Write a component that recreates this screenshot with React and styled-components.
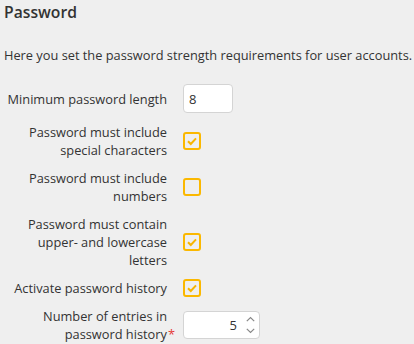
import React, { useState } from 'react';
import styled, { createGlobalStyle } from 'styled-components';

const GlobalStyle = createGlobalStyle`
  body {
    margin: 0;
    background: #efefef;
    font-family: "Open Sans", "Noto Sans", sans-serif;
    color: #333;
  }
`;

function CheckIcon() {
  return (
    <svg width="12" height="12" viewBox="0 0 12 12">
      <path d="M2 6.2 L4.8 9 L10 3.4" fill="none" stroke="#f7b500" strokeWidth="2" />
    </svg>
  );
}

function Check({ checked, onClick }) {
  return (
    <CheckBox onClick={onClick}>{checked && <CheckIcon />}</CheckBox>
  );
}

function Spinner() {
  return (
    <SpinnerBox>
      <svg width="9" height="7" viewBox="0 0 9 7">
        <path d="M0.8 5.2 L4.5 1.5 L8.2 5.2" fill="none" stroke="#888" strokeWidth="1.2" />
      </svg>
      <svg width="9" height="7" viewBox="0 0 9 7">
        <path d="M0.8 1.8 L4.5 5.5 L8.2 1.8" fill="none" stroke="#888" strokeWidth="1.2" />
      </svg>
    </SpinnerBox>
  );
}

function App() {
  const [checks, setChecks] = useState({ special: true, numbers: false, cases: true, history: true });
  const toggle = key => setChecks({ ...checks, [key]: !checks[key] });

  return (
    <Container>
      <GlobalStyle />
      <Title>Password</Title>
      <Description>Here you set the password strength requirements for user accounts.</Description>
      <Form>
        <Row>
          <Label>Minimum password length</Label>
          <TextBox>8</TextBox>
        </Row>
        <Row>
          <Label>Password must include special characters</Label>
          <Check checked={checks.special} onClick={() => toggle('special')} />
        </Row>
        <Row>
          <Label>Password must include numbers</Label>
          <Check checked={checks.numbers} onClick={() => toggle('numbers')} />
        </Row>
        <Row>
          <Label>Password must contain upper- and lowercase letters</Label>
          <Check checked={checks.cases} onClick={() => toggle('cases')} />
        </Row>
        <Row>
          <Label>Activate password history</Label>
          <Check checked={checks.history} onClick={() => toggle('history')} />
        </Row>
        <Row>
          <Label>
            Number of entries in password history<Required>*</Required>
          </Label>
          <NumberBox>
            <NumberValue>5</NumberValue>
            <Spinner />
          </NumberBox>
        </Row>
      </Form>
    </Container>
  );
}

export default App;

const Container = styled.div`
  padding: 0 4px;
`;

const Title = styled.div`
  font-size: 15.7px;
  font-weight: 600;
  line-height: 24px;
  color: #333;
`;

const Description = styled.div`
  margin-top: 22px;
  font-size: 12.8px;
  line-height: 18px;
  white-space: nowrap;
`;

const Form = styled.div`
  margin-top: 20px;
  display: flex;
  flex-direction: column;
  gap: 10px;
`;

const Row = styled.div`
  display: flex;
  align-items: center;
  gap: 16px;
`;

const Label = styled.div`
  width: 163px;
  text-align: right;
  font-size: 12.8px;
  line-height: 18px;
`;

const Required = styled.span`
  color: #e53935;
  margin-left: 1px;
  margin-right: -8px;
`;

const TextBox = styled.div`
  box-sizing: border-box;
  width: 50px;
  height: 29px;
  padding: 0 5px;
  display: flex;
  align-items: center;
  background: #fff;
  border: 1px solid #d4d4d4;
  border-radius: 4px;
  font-size: 13px;
`;

const CheckBox = styled.div`
  box-sizing: border-box;
  width: 18px;
  height: 18px;
  border: 2px solid #fbb800;
  border-radius: 3px;
  display: flex;
  align-items: center;
  justify-content: center;
  cursor: pointer;
`;

const NumberBox = styled.div`
  box-sizing: border-box;
  width: 77px;
  height: 28px;
  padding: 0 4px 0 7px;
  display: flex;
  align-items: center;
  justify-content: flex-end;
  gap: 9px;
  background: #fff;
  border: 1px solid #d4d4d4;
  border-radius: 4px;
  font-size: 13px;
`;

const NumberValue = styled.span``;

const SpinnerBox = styled.div`
  display: flex;
  flex-direction: column;
  gap: 4px;
`;
